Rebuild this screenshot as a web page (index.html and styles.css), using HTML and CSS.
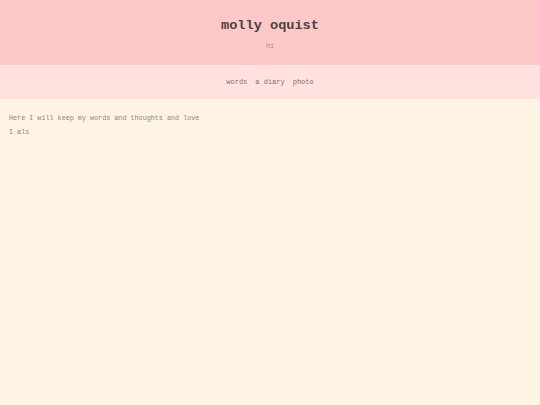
FILE: index.html
```html
<!DOCTYPE html>
<html>
<head>
<meta charset="utf-8">
<link rel="stylesheet" href="styles.css">
</head>
<body>
<header class="site-header">
  <h1 class="title">molly oquist</h1>
  <p class="subtitle">hi</p>
</header>
<nav class="site-nav">
  <a class="nav-link" href="#">words</a>
  <a class="nav-link" href="#">a diary</a>
  <a class="nav-link" href="#">photo</a>
</nav>
<main class="content">
  <p class="line">Here I will keep my words and thoughts and love</p>
  <p class="line">I als</p>
</main>
</body>
</html>
```
FILE: styles.css
```css
html, body {
  margin: 0;
  padding: 0;
  height: 100%;
}
body {
  background: #fff4e4;
  font-family: "Liberation Mono", "Courier New", monospace;
  color: #8c8c8c;
}
.site-header {
  background: #ffc8c8;
  height: 65px;
  display: flex;
  flex-direction: column;
  align-items: center;
  box-sizing: border-box;
  padding-top: 18px;
}
.title {
  margin: 0;
  font-size: 13.6px;
  line-height: 16px;
  font-weight: bold;
  color: #444;
}
.subtitle {
  margin: 8px 0 0;
  font-size: 6.8px;
  line-height: 9px;
  color: #9a8a8a;
}
.site-nav {
  background: #ffe2df;
  height: 34px;
  display: flex;
  justify-content: center;
  align-items: center;
  gap: 8px;
}
.nav-link {
  font-size: 7px;
  line-height: 10px;
  color: #7a7070;
  text-decoration: none;
}
.content {
  padding: 15px 9px;
}
.line {
  margin: 0 0 5px;
  font-size: 6.75px;
  line-height: 9px;
  color: #8c8680;
}
```
